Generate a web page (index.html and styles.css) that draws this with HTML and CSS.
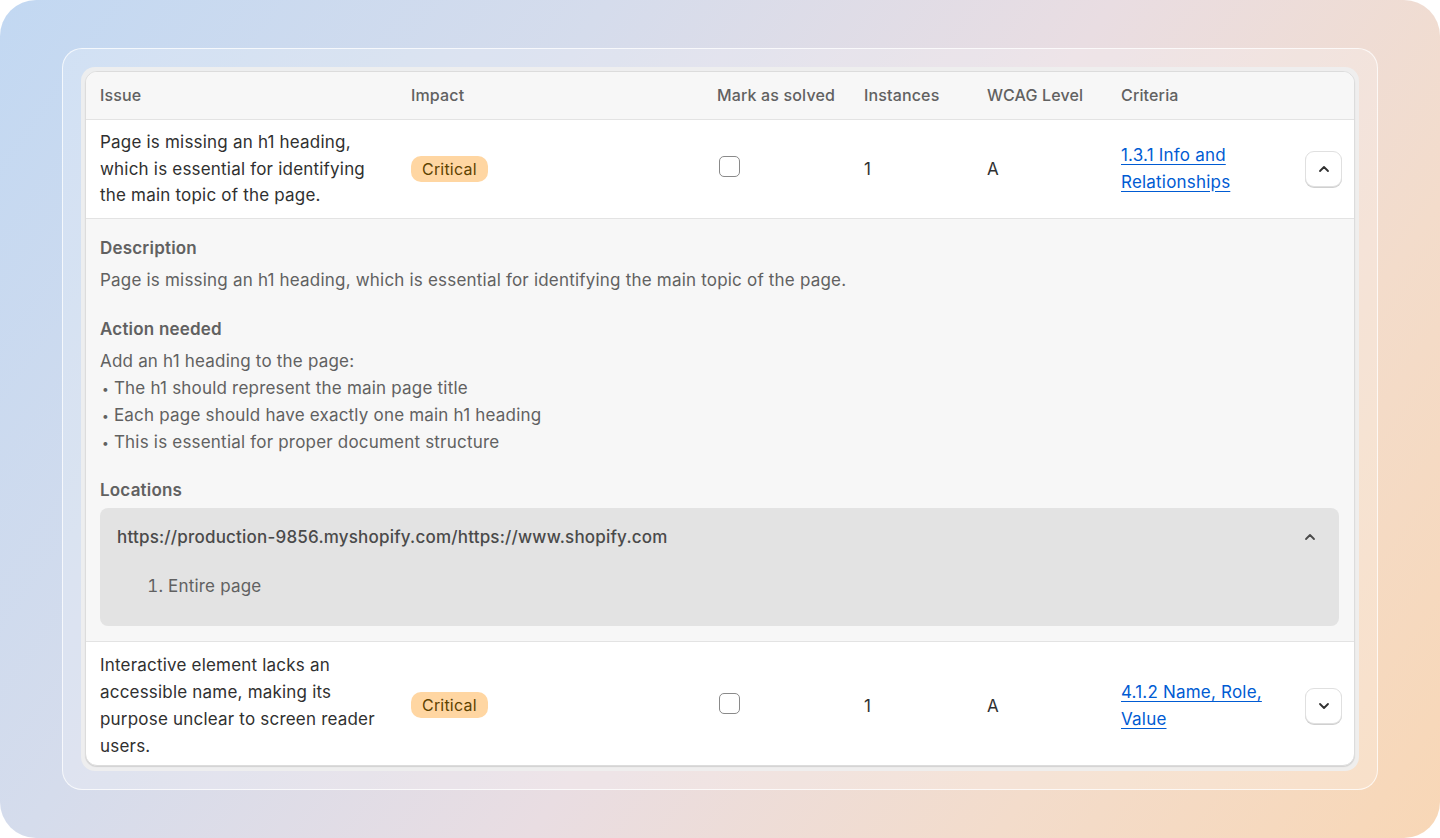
FILE: index.html
```html
<!doctype html>
<html>
<head>
<title>Accessibility issues</title>
<link rel="stylesheet" href="styles.css">
</head>
<body>
<div class="page">
	<div class="frame">
		<div class="tray">
			<div class="card">
				<div class="row head">
					<div class="cell">Issue</div>
					<div class="cell">Impact</div>
					<div class="cell">Mark as solved</div>
					<div class="cell">Instances</div>
					<div class="cell">WCAG Level</div>
					<div class="cell">Criteria</div>
					<div class="cell"></div>
				</div>

				<div class="row issue">
					<div class="cell title">Page is missing an h1 heading, which is essential for identifying the main topic of the page.</div>
					<div class="cell"><span class="badge">Critical</span></div>
					<div class="cell"><input type="checkbox" class="check"></div>
					<div class="cell num">1</div>
					<div class="cell num">A</div>
					<div class="cell crit"><a href="#">1.3.1 Info and Relationships</a></div>
					<div class="cell"><button class="toggle" aria-label="Collapse">
						<svg width="14" height="14" viewBox="0 0 14 14"><path d="M3 9l4-4 4 4" fill="none" stroke="#303030" stroke-width="1.8" stroke-linecap="round" stroke-linejoin="round"/></svg>
					</button></div>
				</div>

				<div class="details">
					<h4>Description</h4>
					<p>Page is missing an h1 heading, which is essential for identifying the main topic of the page.</p>

					<h4>Action needed</h4>
					<p class="steps">Add an h1 heading to the page:<br>
					<span class="dot">•</span> The h1 should represent the main page title<br>
					<span class="dot">•</span> Each page should have exactly one main h1 heading<br>
					<span class="dot">•</span> This is essential for proper document structure</p>

					<h4 class="loc-title">Locations</h4>
					<div class="location">
						<div class="loc-head">
							<span class="url">https://production-9856.myshopify.com/https://www.shopify.com</span>
							<svg width="14" height="14" viewBox="0 0 14 14"><path d="M3 9l4-4 4 4" fill="none" stroke="#4a4a4a" stroke-width="1.8" stroke-linecap="round" stroke-linejoin="round"/></svg>
						</div>
						<ol class="loc-list">
							<li>Entire page</li>
						</ol>
					</div>
				</div>

				<div class="row issue last">
					<div class="cell title">Interactive element lacks an accessible name, making its purpose unclear to screen reader users.</div>
					<div class="cell"><span class="badge">Critical</span></div>
					<div class="cell"><input type="checkbox" class="check"></div>
					<div class="cell num">1</div>
					<div class="cell num">A</div>
					<div class="cell crit"><a href="#">4.1.2 Name, Role, Value</a></div>
					<div class="cell"><button class="toggle" aria-label="Expand">
						<svg width="14" height="14" viewBox="0 0 14 14"><path d="M3 5l4 4 4-4" fill="none" stroke="#303030" stroke-width="1.8" stroke-linecap="round" stroke-linejoin="round"/></svg>
					</button></div>
				</div>
			</div>
		</div>
	</div>
</div>
</body>
</html>
```

FILE: styles.css
```css
body {
  margin: 0;
  background: #fff;
  font-family: Inter, "Noto Sans", sans-serif;
  color: #303030;
}
.page {
  width: 1440px;
  height: 838px;
  box-sizing: border-box;
  padding: 48px 62px;
  border-radius: 36px;
  background: linear-gradient(125deg, #c2d8f2 0%, #d5dcec 30%, #e9dde2 55%, #f3dccb 78%, #f8d7b6 100%);
}
.frame {
  box-sizing: border-box;
  height: 742px;
  padding: 18px;
  border: 1px solid rgba(255, 255, 255, .75);
  border-radius: 20px;
  background: rgba(255, 255, 255, .22);
}
.tray {
  padding: 4px 4px 5px;
  border-radius: 14px;
  background: rgba(238, 238, 238, .95);
}
.card {
  background: #fff;
  border: 1px solid #dcdcdc;
  border-radius: 12px;
  overflow: hidden;
  box-shadow: 0 1px 1px rgba(0, 0, 0, .12);
}

/* table rows */
.row {
  display: grid;
  grid-template-columns: 311px 306px 147px 123px 134px 184px 1fr;
  align-items: center;
  padding: 0 15px 0 14px;
  font-size: 17px;
  letter-spacing: .2px;
  line-height: 26.5px;
}
.head {
  height: 47px;
  background: #f7f7f7;
  border-bottom: 1px solid #e3e3e3;
  color: #616161;
  font-size: 16px;
  letter-spacing: .15px;
  font-weight: 450;
}
.issue {
  padding-top: 9px;
  padding-bottom: 9px;
  border-bottom: 1px solid #e3e3e3;
}
.issue.last {
  padding-top: 10px;
  padding-bottom: 5px;
  line-height: 27px;
  border-bottom: 0;
}
.title {
  max-width: 282px;
}
.badge {
  display: inline-block;
  padding: 0 11px;
  height: 26px;
  line-height: 26px;
  border-radius: 10px;
  background: #ffd6a2;
  color: #5e4200;
  font-size: 16px;
  font-weight: 400;
}
.check {
  appearance: none;
  display: block;
  margin: -4px 0 0 2px;
  width: 21px;
  height: 21px;
  box-sizing: border-box;
  border: 1px solid #8a8a8a;
  border-radius: 5px;
  background: #fff;
}
.num {
  padding-top: 1px;
}
.crit {
  max-width: 160px;
}
.crit a {
  color: #005bd3;
  text-decoration: underline;
  text-underline-offset: 3px;
}
.toggle {
  display: flex;
  align-items: center;
  justify-content: center;
  width: 37px;
  height: 36px;
  padding: 0;
  border: 1px solid #e0e0e0;
  border-radius: 9px;
  background: #fff;
  box-shadow: 0 1px 0 #d0d0d0;
}

/* expanded panel */
.details {
  background: #f7f7f7;
  border-bottom: 1px solid #e3e3e3;
  padding: 16px 15px 15px 14px;
  color: #616161;
  font-size: 17px;
  letter-spacing: .2px;
  line-height: 26.5px;
}
.details h4 {
  margin: 0 0 6px;
  font-size: 17px;
  font-weight: 600;
}
.details p {
  margin: 0 0 22px;
}
.details .steps {
  line-height: 27px;
  margin-bottom: 21px;
}
.details .loc-title {
  margin-bottom: 4px;
}
.dot {
  font-size: 12px;
  line-height: 0;
  margin: 0 0 0 2px;
  vertical-align: 1px;
}
.location {
  border-radius: 8px;
  background: #e3e3e3;
  padding: 16px 22px 16px 17px;
}
.loc-head {
  display: flex;
  justify-content: space-between;
  align-items: center;
}
.url {
  color: #4a4a4a;
  font-weight: 500;
}
.loc-list {
  margin: 23px 0 10px;
  padding-left: 51px;
}
```
